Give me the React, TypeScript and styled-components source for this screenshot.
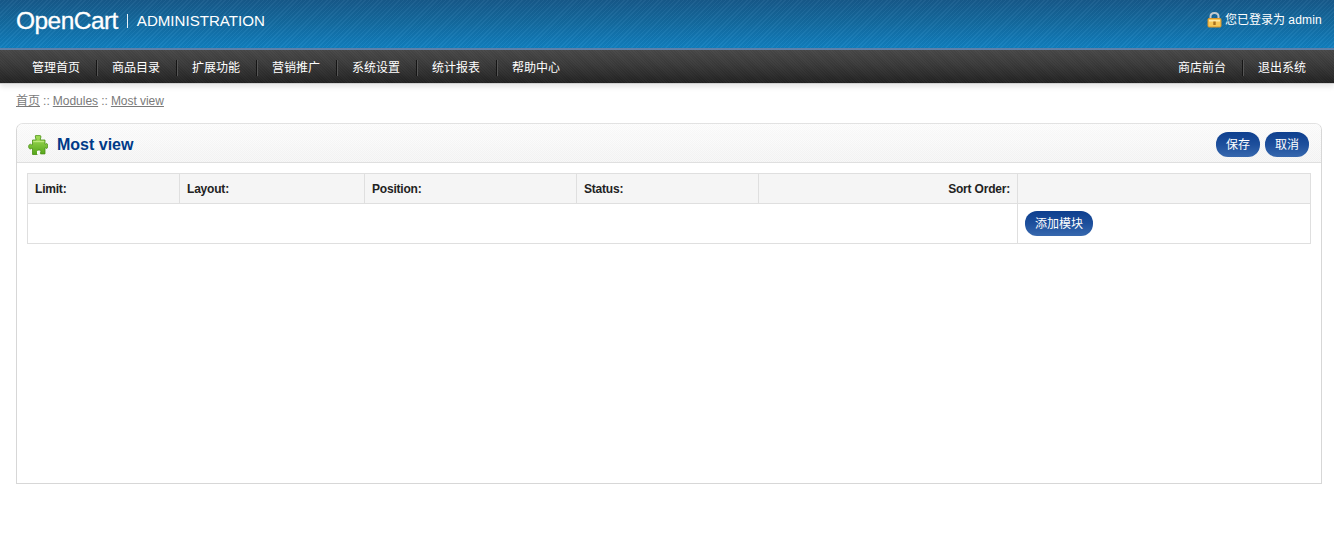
import React from "react";
import styled, { createGlobalStyle } from "styled-components";

const Global = createGlobalStyle`
  html, body { margin: 0; padding: 0; background: #fff; }
  body { font-family: "Liberation Sans", "Noto Sans CJK SC", sans-serif; font-size: 12px; color: #000; }
`;

const Page = styled.div`
  display: flex;
  flex-direction: column;
  min-height: 555px;
`;

const Header = styled.header`
  height: 48px;
  display: flex;
  align-items: center;
  justify-content: space-between;
  padding: 0 12px 8px 16px;
  box-sizing: border-box;
  background:
    repeating-linear-gradient(135deg, rgba(255,255,255,.04) 0 1px, rgba(0,0,0,.03) 1px 3px),
    linear-gradient(180deg, #175a8b 0%, #146a9f 45%, #1180c0 100%);
`;

const Brand = styled.div`
  display: flex;
  align-items: center;
  color: #fff;
  height: 40px;
  padding-top: 2px;
  box-sizing: border-box;
`;

const BrandName = styled.span`
  font-size: 24.5px;
  letter-spacing: -0.55px;
  line-height: 28px;
  -webkit-text-stroke: 0.3px #fff;
`;

const BrandDivider = styled.span`
  width: 1px;
  height: 14px;
  background: #e6f0f7;
  margin: 0 9px 0 9px;
`;

const BrandSub = styled.span`
  font-size: 15.1px;
  line-height: 18px;
`;

const Logged = styled.div`
  display: flex;
  align-items: center;
  gap: 3px;
  color: #fff;
  font-size: 12px;
  line-height: 16px;
`;

const LoggedName = styled.span`
  white-space: pre;
`;

const LoggedUser = styled.span`
  letter-spacing: 0.2px;
`;

const Nav = styled.nav`
  height: 35px;
  box-sizing: border-box;
  border-top: 2px solid #5f80a8;
  display: flex;
  justify-content: space-between;
  padding: 0 12px 0 16px;
  background:
    repeating-linear-gradient(45deg, rgba(255,255,255,.02) 0 1px, rgba(0,0,0,.03) 1px 2px),
    linear-gradient(180deg, #484848 0%, #3a3a3a 45%, #222 100%);
  box-shadow: 0 1px 0 #d0d0d0, 0 4px 5px rgba(0,0,0,.1);
`;

const NavGroup = styled.ul`
  display: flex;
  align-items: center;
  list-style: none;
  margin: 0;
  padding: 0;
`;

const NavItem = styled.li<{ $last?: boolean }>`
  color: #fff;
  font-size: 12px;
  line-height: 16px;
  padding: 0 16px;
  height: 16px;
  box-sizing: border-box;
  width: 80px;
  margin-top: 2px;
  box-shadow: ${(p) => (p.$last ? "none" : "1px 0 0 #151515, 2px 0 0 #555")};
`;

const Crumbs = styled.div`
  padding: 10px 16px 0;
  height: 40px;
  box-sizing: border-box;
  font-size: 12px;
  line-height: 16px;
  color: #7a7a7a;
  word-spacing: -0.3px;
`;

const Crumb = styled.a`
  color: #7a7a7a;
  text-decoration: underline;
`;

const Box = styled.section`
  margin: 0 12px 0 16px;
  height: 361px;
  box-sizing: border-box;
  border: 1px solid #d7d7d7;
  border-top-color: #e2e2e2;
  border-radius: 7px 7px 0 0;
  display: flex;
  flex-direction: column;
`;

const Heading = styled.div`
  height: 39px;
  box-sizing: border-box;
  flex: none;
  display: flex;
  align-items: center;
  justify-content: space-between;
  padding: 2px 12px 0 11px;
  border-bottom: 1px solid #dfdfdf;
  border-radius: 6px 6px 0 0;
  background:
    repeating-conic-gradient(rgba(0,0,0,.012) 0 25%, rgba(255,255,255,.25) 0 50%) 0 0 / 2px 2px,
    linear-gradient(180deg, #fcfcfc 0%, #f4f4f4 100%);
`;

const Title = styled.h1`
  display: flex;
  align-items: center;
  gap: 9px;
  margin: 0;
  font-size: 16px;
  font-weight: bold;
  line-height: 22px;
  padding-top: 1px;
  color: #003a88;
`;

const Buttons = styled.div`
  display: flex;
  gap: 5px;
`;

const Button = styled.a`
  display: inline-block;
  height: 25px;
  line-height: 27px;
  padding: 0 10px;
  border-radius: 12px;
  color: #fff;
  font-size: 12px;
  white-space: nowrap;
  background: linear-gradient(180deg, #0e3f8e 0%, #1d4f9c 50%, #3768ae 100%);
`;

const Content = styled.div`
  padding: 10px 10px 0;
`;

const Table = styled.table`
  width: 1284px;
  border-collapse: collapse;
  table-layout: fixed;
`;

const Th = styled.th<{ $w?: number; $right?: boolean }>`
  width: ${(p) => (p.$w ? `${p.$w}px` : "auto")};
  height: 30px;
  padding: 0 7px;
  box-sizing: border-box;
  background: repeating-conic-gradient(#f2f2f2 0 25%, #f7f7f7 0 50%) 0 0 / 2px 2px;
  border: 1px solid #dfdfdf;
  font-size: 12px;
  font-weight: bold;
  letter-spacing: -0.2px;
  color: #222;
  text-align: ${(p) => (p.$right ? "right" : "left")};
`;

const Td = styled.td`
  height: 40px;
  padding: 0 7px;
  box-sizing: border-box;
  border: 1px solid #dfdfdf;
`;

const Puzzle = () => (
  <svg width="20" height="20" viewBox="0 0 20 20">
    <defs>
      <linearGradient id="pz" x1="0" y1="0" x2="0" y2="1">
        <stop offset="0" stopColor="#a6e05a" />
        <stop offset="1" stopColor="#55a51a" />
      </linearGradient>
    </defs>
    <path
      d="M7.5.6h4.6c.7 0 1 .7.8 1.4l-.7 3H17v4.2h.6c.3-.4.6-.6 1-.6.8 0 1.1.9 1.1 2.4s-.3 2.4-1.1 2.4c-.4 0-.7-.2-1-.6H17v6.1h-4.4V17c.3-.3.4-.8.1-1.3-.6-.9-2.5-.9-3.1 0-.3.5-.2 1 .1 1.3v2.5H4.5v-6.1h-1c-.3.4-.6.6-1 .6-1 0-1.9-.9-1.9-2.4s.9-2.4 1.9-2.4c.4 0 .7.2 1 .6h1V5h3.6l-.7-3c-.2-.7.1-1.4.1-1.4z"
      fill="url(#pz)"
      stroke="#4a8f14"
      strokeWidth=".8"
    />
    <path d="M5.2 5.8h11v1.4h-11z" fill="#cdf08f" opacity=".75" />
    <path d="M9 19.5V17c-.3-.4-.2-.9.2-1.1.6-.3 1.4-.1 1.7.3.2.3.1.6-.1.8v2.5z" fill="#fff" />
  </svg>
);

const Lock = () => (
  <svg width="15" height="16" viewBox="0 0 15 16">
    <path d="M3.5 7V4.6C3.5 2.4 5.2 1 7.5 1s4 1.4 4 3.6V7" fill="none" stroke="#c2c9cd" strokeWidth="2" />
    <rect x="1" y="6.5" width="13" height="8.5" rx="1" fill="#f6c757" stroke="#d9952b" />
    <rect x="2" y="8" width="11" height="1.5" fill="#fde9a6" />
    <rect x="6.3" y="9.5" width="2.4" height="3.5" fill="#a8701d" />
  </svg>
);

export default function App() {
  const left = ["管理首页", "商品目录", "扩展功能", "营销推广", "系统设置", "统计报表", "帮助中心"];
  return (
    <Page>
      <Global />
      <Header>
        <Brand>
          <BrandName>OpenCart</BrandName>
          <BrandDivider />
          <BrandSub>ADMINISTRATION</BrandSub>
        </Brand>
        <Logged>
          <Lock />
          <LoggedName>您已登录为 <LoggedUser>admin</LoggedUser></LoggedName>
        </Logged>
      </Header>
      <Nav>
        <NavGroup>
          {left.map((t, i) => (
            <NavItem key={t} $last={i === left.length - 1}>{t}</NavItem>
          ))}
        </NavGroup>
        <NavGroup>
          <NavItem>商店前台</NavItem>
          <NavItem $last>退出系统</NavItem>
        </NavGroup>
      </Nav>
      <Crumbs>
        <Crumb>首页</Crumb> :: <Crumb>Modules</Crumb> :: <Crumb>Most view</Crumb>
      </Crumbs>
      <Box>
        <Heading>
          <Title>
            <Puzzle />
            Most view
          </Title>
          <Buttons>
            <Button>保存</Button>
            <Button>取消</Button>
          </Buttons>
        </Heading>
        <Content>
          <Table>
            <thead>
              <tr>
                <Th $w={152}>Limit:</Th>
                <Th $w={185}>Layout:</Th>
                <Th $w={212}>Position:</Th>
                <Th $w={182}>Status:</Th>
                <Th $w={259} $right>Sort Order:</Th>
                <Th />
              </tr>
            </thead>
            <tbody>
              <tr>
                <Td colSpan={5} />
                <Td>
                  <Button>添加模块</Button>
                </Td>
              </tr>
            </tbody>
          </Table>
        </Content>
      </Box>
    </Page>
  );
}
